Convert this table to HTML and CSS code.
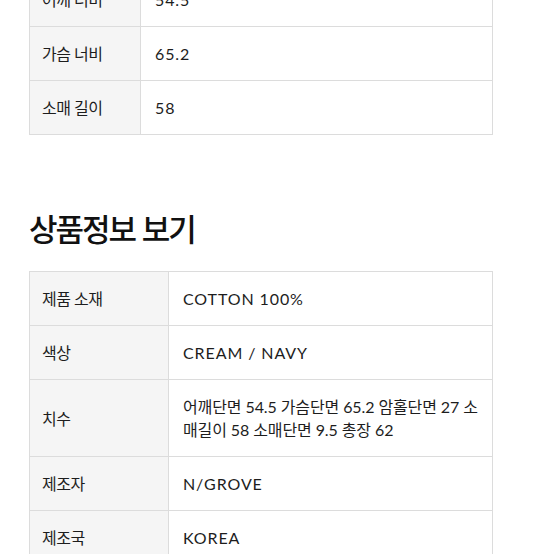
FILE: index.html
```html
<!DOCTYPE html>
<html lang="ko">
<head>
<meta charset="utf-8">
<link rel="stylesheet" href="styles.css">
</head>
<body>
<div class="page">
  <table class="spec spec-size">
    <tr><th>어깨 너비</th><td>54.5</td></tr>
    <tr><th>가슴 너비</th><td>65.2</td></tr>
    <tr><th>소매 길이</th><td>58</td></tr>
  </table>
  <h2 class="title">상품정보 보기</h2>
  <table class="spec spec-info">
    <tr><th>제품 소재</th><td>COTTON 100%</td></tr>
    <tr><th>색상</th><td>CREAM / NAVY</td></tr>
    <tr><th>치수</th><td class="mixed">어깨단면 54.5 가슴단면 65.2 암홀단면 27 소매길이 58 소매단면 9.5 총장 62</td></tr>
    <tr><th>제조자</th><td>N/GROVE</td></tr>
    <tr><th>제조국</th><td>KOREA</td></tr>
  </table>
</div>
</body>
</html>
```
FILE: styles.css
```css
html, body {
  margin: 0;
  padding: 0;
  background: #fff;
}
body {
  font-family: Lato, "Noto Sans CJK KR", sans-serif;
  color: #1d1d1d;
  overflow: hidden;
}
.page {
  width: 464px;
  margin: -28px 0 0 29px;
}
.spec {
  width: 100%;
  border-collapse: collapse;
  table-layout: fixed;
  font-size: 16px;
  line-height: 23px;
}
.spec th, .spec td {
  box-sizing: border-box;
  border: 1px solid #dcdcdc;
  padding: 15px 14px;
  text-align: left;
  vertical-align: middle;
}
.spec th {
  background: #f5f5f5;
  font-weight: 400;
  padding-left: 12px;
  letter-spacing: -0.5px;
}
.spec td {
  background: #fff;
  letter-spacing: 0.9px;
}
.spec td.mixed {
  letter-spacing: -0.1px;
  padding-right: 7px;
  word-break: break-all;
}
.spec-size th { width: 111px; }
.spec-info th { width: 139px; }
.title {
  margin: 73px 0 23px;
  font-family: "Noto Sans CJK KR", sans-serif;
  font-size: 31px;
  line-height: 40px;
  font-weight: 500;
  letter-spacing: -2px;
  color: #111;
}
```
